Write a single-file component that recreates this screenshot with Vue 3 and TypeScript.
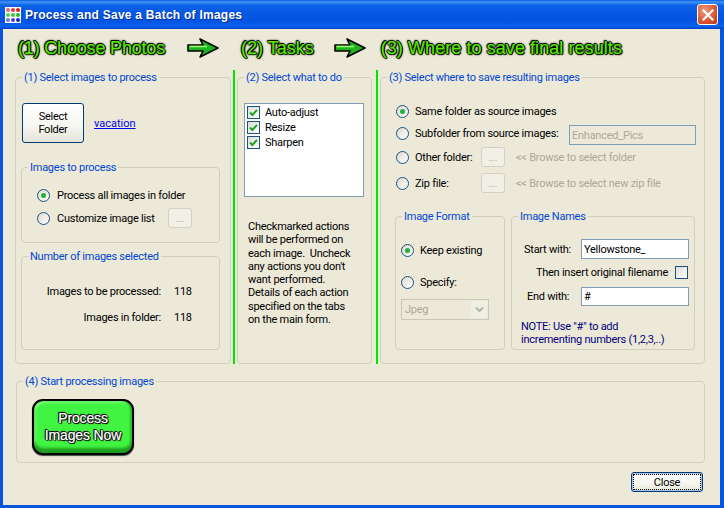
<script setup lang="ts">
const dotColors: string[] = ['#c77', '#e33', '#d22', '#5c5', '#3c3', '#2b2', '#77c', '#44d', '#22c']
const actions: string[] = ['Auto-adjust', 'Resize', 'Sharpen']
const tips: string[] = [
  'Checkmarked actions',
  'will be performed on',
  'each image.  Uncheck',
  "any actions you don't",
  'want performed.',
  'Details of each action',
  'specified on the tabs',
  'on the main form.',
]
</script>

<template>
  <div class="window">
    <header class="titlebar">
      <div class="app-icon">
        <i v-for="(c, n) in dotColors" :key="n" :style="{ background: c }"></i>
      </div>
      <span class="title">Process and Save a Batch of Images</span>
      <button class="close-x" aria-label="Close">
        <svg width="12" height="12" viewBox="0 0 12 12"><path d="M1.5 1.5 L10.5 10.5 M10.5 1.5 L1.5 10.5" stroke="#fff" stroke-width="2.2" stroke-linecap="square" /></svg>
      </button>
    </header>

    <main class="client">
      <div class="steps">
        <span class="step s1">(1) Choose Photos</span>
        <svg class="arrow a1" width="32" height="20" viewBox="0 0 32 20">
          <path d="M1 7 H16 L13 1 L31 10 L13 19 L16 13 H1 Z" fill="#1fb31f" stroke="#000" stroke-width="1.6" stroke-linejoin="round" />
          <path d="M2.5 8.5 H20" stroke="#9dff70" stroke-width="1.6" />
        </svg>
        <span class="step s2">(2) Tasks</span>
        <svg class="arrow a2" width="32" height="20" viewBox="0 0 32 20">
          <path d="M1 7 H16 L13 1 L31 10 L13 19 L16 13 H1 Z" fill="#1fb31f" stroke="#000" stroke-width="1.6" stroke-linejoin="round" />
          <path d="M2.5 8.5 H20" stroke="#9dff70" stroke-width="1.6" />
        </svg>
        <span class="step s3">(3) Where to save final results</span>
      </div>

      <div class="columns">
        <fieldset class="group col1">
          <legend>(1) Select images to process</legend>
          <div class="body1">
            <div class="folder-row">
              <button class="xp-btn select-folder">Select<br />Folder</button>
              <a class="link">vacation</a>
            </div>
            <fieldset class="group images-group">
              <legend>Images to process</legend>
              <label class="radio-row r1"><span class="radio on"></span>Process all images in folder</label>
              <label class="radio-row r2"><span class="radio"></span><span class="opt-c">Customize image list</span><button class="dots">...</button></label>
            </fieldset>
            <fieldset class="group count-group">
              <legend>Number of images selected</legend>
              <div class="count-grid">
                <span class="count-label">Images to be processed:</span><span class="count-value">118</span>
                <span class="count-label">Images in folder:</span><span class="count-value">118</span>
              </div>
            </fieldset>
          </div>
        </fieldset>

        <div class="divider"></div>

        <fieldset class="group col2">
          <legend>(2) Select what to do</legend>
          <div class="body2">
            <div class="listbox">
              <div v-for="a in actions" :key="a" class="list-item">
                <span class="check">
                  <svg width="9" height="9" viewBox="0 0 9 9"><path d="M1 4.5 L3.4 7 L8 1.8" fill="none" stroke="#21a121" stroke-width="2" /></svg>
                </span>{{ a }}
              </div>
            </div>
            <p class="tips"><span v-for="t in tips" :key="t">{{ t }}</span></p>
          </div>
        </fieldset>

        <div class="divider"></div>

        <fieldset class="group col3">
          <legend>(3) Select where to save resulting images</legend>
          <div class="body3">
            <div class="dest">
              <label class="radio-row d1"><span class="radio on"></span>Same folder as source images</label>
              <label class="radio-row d2"><span class="radio"></span><span class="opt-s">Subfolder from source images:</span><input class="field disabled sub-input" value="Enhanced_Pics" disabled /></label>
              <label class="radio-row d3"><span class="radio"></span><span class="opt">Other folder:</span><button class="dots">...</button><span class="hint">&lt;&lt; Browse to select folder</span></label>
              <label class="radio-row d4"><span class="radio"></span><span class="opt">Zip file:</span><button class="dots">...</button><span class="hint">&lt;&lt; Browse to select new zip file</span></label>
            </div>
            <div class="lower">
              <fieldset class="group format">
                <legend>Image Format</legend>
                <label class="radio-row f1"><span class="radio on"></span>Keep existing</label>
                <label class="radio-row f2"><span class="radio"></span>Specify:</label>
                <div class="select">
                  <span>Jpeg</span>
                  <span class="select-btn">
                    <svg width="9" height="7" viewBox="0 0 9 7"><path d="M1 1.5 L4.5 5 L8 1.5" fill="none" stroke="#b5b5a8" stroke-width="2" /></svg>
                  </span>
                </div>
              </fieldset>
              <fieldset class="group names">
                <legend>Image Names</legend>
                <div class="name-row n1"><span class="name-label">Start with:</span><input class="field" value="Yellowstone_" /></div>
                <div class="insert-row">Then insert original filename<span class="check empty"></span></div>
                <div class="name-row n2"><span class="name-label">End with:</span><input class="field" value="#" /></div>
                <p class="note">NOTE: Use "#" to add<br />incrementing numbers (1,2,3,..)</p>
              </fieldset>
            </div>
          </div>
        </fieldset>
      </div>

      <fieldset class="group start">
        <legend>(4) Start processing images</legend>
        <button class="go">Process<br />Images Now</button>
      </fieldset>

      <div class="footer">
        <button class="xp-btn close-btn"><span>Close</span></button>
      </div>
    </main>
  </div>
</template>

<style>
html, body { margin: 0; padding: 0; background: #ece9d8; }
</style>

<style scoped>
.window {
  width: 724px;
  height: 508px;
  display: flex;
  flex-direction: column;
  overflow: hidden;
  background: #0855dd;
  font-family: Roboto, "Liberation Sans", Arial, sans-serif;
  font-size: 11px;
  letter-spacing: -0.25px;
  color: #000;
}
.titlebar {
  height: 29px;
  flex: none;
  display: flex;
  align-items: center;
  padding: 0 6px 0 5px;
  box-sizing: border-box;
  background: linear-gradient(180deg, #0a5be0 0, #3f94f5 2px, #0f63ea 5px, #0458e2 12px, #0355e3 22px, #0a63f0 26px, #0042c8 29px);
}
.app-icon {
  width: 16px;
  height: 16px;
  background: #fff;
  display: grid;
  grid-template-columns: repeat(3, 4px);
  grid-auto-rows: 4px;
  gap: 1px;
  justify-content: center;
  align-content: center;
}
.app-icon i { border-radius: 50%; display: block; }
.title {
  margin-left: 4px;
  color: #fff;
  font-family: "Liberation Sans", Arial, sans-serif;
  font-weight: 700;
  font-size: 12px;
  letter-spacing: 0.25px;
  text-shadow: 1px 1px 0 #0a2f90;
  white-space: nowrap;
}
.close-x {
  margin-left: auto;
  width: 21px;
  height: 21px;
  padding: 0;
  display: flex;
  align-items: center;
  justify-content: center;
  border: 1px solid #fff;
  border-radius: 3px;
  background: radial-gradient(circle at 35% 30%, #ee9a80, #dc5a34 55%, #bb3516);
}
.client {
  flex: 1;
  margin: 0 4px 3px 3px;
  background: #ece9d8;
  display: flex;
  flex-direction: column;
  min-height: 0;
}
.steps {
  height: 41px;
  flex: none;
  display: flex;
  align-items: center;
  padding-bottom: 2px;
  box-sizing: border-box;
}
.step {
  color: #5ae800;
  font-family: "Liberation Sans", Arial, sans-serif;
  font-size: 18px;
  white-space: nowrap;
  -webkit-text-stroke: 0.25px #5ae800;
  text-shadow: 1px 0 0 #000, -1px 0 0 #000, 0 1px 0 #000, 0 -1px 0 #000, 0 0 3px #000, 1px 1px 1px #000, -1px -1px 1px #000;
}
.s1 { margin-left: 15px; letter-spacing: -0.18px; }
.a1 { margin-left: 22px; margin-top: -1px; }
.s2 { margin-left: 22px; letter-spacing: 0; }
.a2 { margin-left: 20px; margin-top: -1px; }
.s3 { margin-left: 15px; letter-spacing: 0.07px; }

.group {
  margin: 0;
  padding: 0;
  min-width: 0;
  box-sizing: border-box;
  border: 1px solid #d0d0bf;
  border-radius: 4px;
}
.group > legend {
  margin-left: 6px;
  padding: 0 2px;
  color: #0046d5;
  line-height: 15px;
}
.columns {
  height: 294px;
  flex: none;
  display: flex;
  margin-left: 12px;
}
.col1 { width: 216px; flex: none; }
.divider { width: 2px; background: #00e600; margin: 0 2px; flex: none; }
.col2 { width: 135px; flex: none; margin-right: 2px; }
.col3 { width: 325px; flex: none; }
.body1 { padding-left: 5px; }
.body2 { padding-left: 6px; }
.body3 { padding-left: 14px; }

.folder-row { display: flex; align-items: flex-start; margin: 18px 0 0 1px; }
.xp-btn {
  font: inherit;
  letter-spacing: inherit;
  color: #000;
  padding: 0;
  border: 1px solid #003c74;
  border-radius: 3px;
  background: linear-gradient(180deg, #fff 0, #f6f6f0 60%, #e6e4d8 100%);
}
.select-folder { width: 62px; height: 40px; line-height: 13px; }
.link { margin: 14px 0 0 10px; color: #00e; text-decoration: underline; letter-spacing: 0; }

.images-group { height: 83px; margin-top: 17px; width: 199px; }
.radio-row { display: flex; align-items: center; white-space: nowrap; height: 14px; }
.radio {
  width: 11px;
  height: 11px;
  flex: none;
  margin-right: 6px;
  border: 1px solid #1c5180;
  border-radius: 50%;
  background: linear-gradient(135deg, #dcd9cc, #fff);
  position: relative;
}
.radio.on::after {
  content: "";
  position: absolute;
  left: 3px;
  top: 3px;
  width: 5px;
  height: 5px;
  border-radius: 50%;
  background: #21b13a;
}
.r1 { margin: 13px 0 0 15px; }
.r2 { margin: 9px 0 0 15px; }
.r1 .radio, .r2 .radio { margin-right: 7px; }
.opt-c { width: 111px; flex: none; }
.dots {
  width: 24px;
  height: 20px;
  padding: 0;
  font: inherit;
  flex: none;
  color: #aca899;
  background: #f2f0e6;
  border: 1px solid #d3d1c4;
  border-radius: 3px;
}
.count-group { height: 101px; margin-top: 6px; width: 199px; }
.count-grid {
  display: grid;
  grid-template-columns: 139px auto;
  column-gap: 13px;
  row-gap: 13px;
  margin-top: 21px;
  line-height: 13px;
}
.count-label { text-align: right; }

.listbox {
  width: 120px;
  height: 94px;
  box-sizing: border-box;
  margin-top: 18px;
  background: #fff;
  border: 1px solid #7f9db9;
  padding: 1px 1px;
}
.list-item { display: flex; align-items: center; height: 15px; }
.check {
  width: 11px;
  height: 11px;
  margin-right: 5px;
  margin-left: 1px;
  flex: none;
  border: 1px solid #1c5180;
  background: linear-gradient(135deg, #dcdcd7, #fff);
  display: flex;
  align-items: center;
  justify-content: center;
}
.tips { margin: 23px 0 0 4px; line-height: 13.3px; }
.tips span { display: block; white-space: pre; }

.dest { padding-left: 1px; }
.d1 { margin-top: 19px; }
.d2 { margin-top: 8px; }
.d3 { margin-top: 7px; height: 20px; }
.d4 { margin-top: 6px; height: 20px; }
.field {
  box-sizing: border-box;
  font: inherit;
  letter-spacing: inherit;
  padding: 0 2px;
  height: 20px;
  border: 1px solid #7f9db9;
  background: #fff;
  color: #000;
  outline: none;
}
.field.disabled { background: #ece9d8; color: #aca899; }
.opt-s { width: 154px; flex: none; }
.sub-input { width: 127px; margin-top: 4px; }
.opt { width: 66px; flex: none; }
.hint { color: #aca899; margin-left: 11px; }
.lower { display: flex; gap: 6px; margin-top: 16px; }
.format { width: 110px; height: 141px; }
.format > .radio-row, .format > .select { margin-left: 5px; }
.f1 { margin-top: 19px; }
.f2 { margin-top: 18px; }
.select {
  width: 88px;
  height: 21px;
  box-sizing: border-box;
  margin-top: 10px;
  display: flex;
  align-items: center;
  justify-content: space-between;
  padding-left: 3px;
  color: #aca899;
  border: 1px solid #c9c7ba;
}
.select-btn {
  width: 16px;
  height: 17px;
  margin-right: 1px;
  background: #f0efe6;
  display: flex;
  align-items: center;
  justify-content: center;
}
.names { width: 184px; height: 141px; }
.name-row { display: flex; align-items: center; margin-left: 5px; }
.name-label { width: 64px; flex: none; padding-left: 7px; box-sizing: border-box; white-space: nowrap; }
.name-row .field { width: 108px; }
.n1 { margin-top: 15px; }
.n2 .field { height: 19px; }
.n2 .name-label { padding-left: 10px; }
.insert-row {
  display: flex;
  align-items: center;
  justify-content: flex-end;
  white-space: nowrap;
  height: 13px;
  margin: 7px 5px 8px 5px;
}
.check.empty { margin: 0 1px 0 7px; }
.note { margin: 14px 0 0 9px; line-height: 13px; color: #000080; white-space: nowrap; }

.start {
  margin: 10px 15px 0 13px;
  height: 89px;
  flex: none;
}
.go {
  display: block;
  width: 102px;
  height: 56px;
  margin: 10px 0 0 15px;
  padding: 0;
  border: 2px solid #000;
  border-radius: 11px;
  box-sizing: border-box;
  font-family: "Liberation Sans", Arial, sans-serif;
  font-size: 14px;
  letter-spacing: -0.15px;
  line-height: 17px;
  color: #fff;
  -webkit-text-stroke: 0.25px #fff;
  text-shadow: 1px 0 0 #000, -1px 0 0 #000, 0 1px 0 #000, 0 -1px 0 #000, 1px 1px 1px #000, -1px -1px 1px #000;
  background: #42f442;
  box-shadow: inset 0 -5px 3px #1f9c1f, inset -2px 0 2px #2cc32c, inset 2px 2px 2px #7dff7d, 0 1px 1px #444;
}
.footer {
  flex: 1;
  display: flex;
  justify-content: flex-end;
  align-items: flex-start;
  padding: 9px 17px 0 0;
}
.close-btn { width: 72px; height: 20px; padding: 1px; box-shadow: inset 0 0 0 1px #a8c0e8; }
.close-btn span {
  display: block;
  height: 100%;
  box-sizing: border-box;
  border: 1px dotted #000;
  line-height: 15px;
  text-align: center;
}
</style>
